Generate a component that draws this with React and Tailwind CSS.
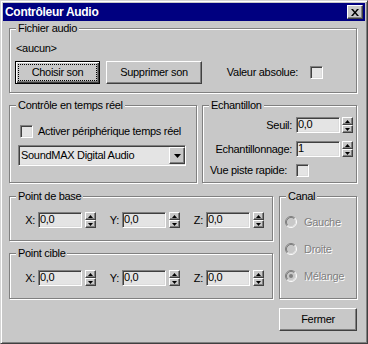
const raised =
  "border border-t-white border-l-white border-r-[#404040] border-b-[#404040] shadow-[inset_-1px_-1px_0_#808080]";
const sunken =
  "border border-t-[#808080] border-l-[#808080] border-r-white border-b-white shadow-[inset_1px_1px_0_#404040,inset_-1px_-1px_0_#dcdcdc]";

function Group({ label, className, children }) {
  return (
    <div className={`border border-[#808080] shadow-[1px_1px_0_#fff,inset_1px_1px_0_#fff] ${className}`}>
      <div className="-mt-[7px] ml-[6px] w-fit bg-[#c8c8c8] px-[2px] leading-[13px]">{label}</div>
      {children}
    </div>
  );
}

function Check() {
  return <div className={`h-[13px] w-[13px] shrink-0 bg-[#e4e4e4] ${sunken}`} />;
}

function Spinner({ gap }) {
  return (
    <div className={`flex h-[16px] w-[11px] shrink-0 flex-col ${gap}`}>
      <div className={`flex h-[8px] items-center justify-center bg-[#c8c8c8] ${raised}`}>
        <svg width="5" height="3" viewBox="0 0 5 3">
          <path d="M2.5 0 5 3H0z" fill="#000" />
        </svg>
      </div>
      <div className={`flex h-[8px] items-center justify-center bg-[#c8c8c8] ${raised}`}>
        <svg width="5" height="3" viewBox="0 0 5 3">
          <path d="M0 0h5L2.5 3z" fill="#000" />
        </svg>
      </div>
    </div>
  );
}

function NumField({ value }) {
  return (
    <div className={`h-[16px] w-[44px] shrink-0 bg-[#e4e4e4] pl-[1px] leading-[12px] ${sunken}`}>{value}</div>
  );
}

function Coord({ axis }) {
  return (
    <div className="flex items-center">
      <span className="w-[26px] pr-[3px] text-right">{axis}:</span>
      <NumField value="0,0" />
      <Spinner gap="ml-[3px]" />
    </div>
  );
}

function Radio({ checked }) {
  return (
    <svg width="12" height="12" viewBox="0 0 12 12" className="shrink-0">
      <circle cx="6" cy="6" r="5" fill="#c8c8c8" />
      <path d="M2.11 9.89A5.5 5.5 0 0 1 9.89 2.11" stroke="#808080" fill="none" />
      <path d="M9.89 2.11A5.5 5.5 0 0 1 2.11 9.89" stroke="#fff" fill="none" />
      <path d="M2.82 9.18A4.5 4.5 0 0 1 9.18 2.82" stroke="#404040" fill="none" opacity="0.5" />
      <path d="M9.18 2.82A4.5 4.5 0 0 1 2.82 9.18" stroke="#dcdcdc" fill="none" />
      {checked && <circle cx="6" cy="6" r="2" fill="#808080" />}
    </svg>
  );
}

const App = () => {
  return (
    <div className="flex h-[344px] w-[368px] flex-col border border-t-[#d4d4d4] border-l-[#d4d4d4] border-r-[#404040] border-b-[#404040] bg-[#c8c8c8] p-[2px] font-['Liberation_Sans',Arial,sans-serif] text-[11px] leading-[13px] tracking-[-0.3px] text-black shadow-[inset_1px_1px_0_#fff,inset_-1px_-1px_0_#808080]">
      <div className="flex h-[18px] items-center justify-between bg-[#000080] pl-[2px] pr-[2px]">
        <span className="text-[12px] font-bold leading-[18px] text-white">Contrôleur Audio</span>
        <div className={`flex h-[14px] w-[16px] items-center justify-center bg-[#c8c8c8] ${raised}`}>
          <svg width="8" height="7" viewBox="0 0 8 7">
            <path d="M0 0h2l2 2.4L6 0h2L5 3.5 8 7H6L4 4.6 2 7H0l3-3.5z" fill="#000" />
          </svg>
        </div>
      </div>

      <div className="flex flex-col pl-[6px]">
        <Group label="Fichier audio" className="mt-[7px] h-[65px] w-[348px]">
          <div className="ml-[6px] mt-[7px]">&lt;aucun&gt;</div>
          <div className="mt-[6px] flex h-[23px] items-center pl-[5px]">
            <button className="h-[23px] w-[85px] border border-black bg-[#c8c8c8] p-[2px] shadow-[inset_1px_1px_0_#fff,inset_-1px_-1px_0_#404040,inset_-2px_-2px_0_#808080]">
              <span className="flex h-full w-full items-center justify-center border border-dotted border-black">
                Choisir son
              </span>
            </button>
            <button className={`ml-[6px] h-[23px] w-[96px] bg-[#c8c8c8] ${raised}`}>Supprimer son</button>
            <span className="ml-auto">Valeur absolue:</span>
            <div className="ml-[12px] mr-[33px]">
              <Check />
            </div>
          </div>
        </Group>

        <div className="mt-[12px] flex gap-[5px]">
          <Group label="Contrôle en temps réel" className="h-[78px] w-[188px]">
            <div className="ml-[10px] mt-[13px] flex h-[13px] items-center">
              <Check />
              <span className="ml-[5px]">Activer périphérique temps réel</span>
            </div>
            <div className={`ml-[8px] mt-[7px] flex h-[21px] w-[168px] items-center bg-[#e4e4e4] ${sunken}`}>
              <span className="flex-1 pl-[2px]">SoundMAX Digital Audio</span>
              <div className={`flex h-[17px] w-[16px] items-center justify-center bg-[#c8c8c8] ${raised}`}>
                <svg width="7" height="4" viewBox="0 0 7 4">
                  <path d="M0 0h7L3.5 4z" fill="#000" />
                </svg>
              </div>
            </div>
          </Group>

          <Group label="Echantillon" className="h-[78px] w-[155px]">
            <div className="mt-[5px] flex h-[16px] items-center justify-end pr-[3px]">
              <span className="mr-[4px]">Seuil:</span>
              <NumField value="0,0" />
              <Spinner gap="ml-[2px]" />
            </div>
            <div className="mt-[8px] flex h-[16px] items-center justify-end pr-[3px]">
              <span className="mr-[4px]">Echantillonnage:</span>
              <NumField value="1" />
              <Spinner gap="ml-[2px]" />
            </div>
            <div className="mt-[7px] flex h-[13px] items-center justify-end pr-[47px]">
              <span className="mr-[9px]">Vue piste rapide:</span>
              <Check />
            </div>
          </Group>
        </div>

        <div className="mt-[13px] flex gap-[6px]">
          <div className="flex w-[264px] flex-col gap-[12px]">
            <Group label="Point de base" className="h-[45px] w-[264px]">
              <div className="mt-[9px] flex h-[16px] items-center pl-[2px]">
                <Coord axis="X" />
                <Coord axis="Y" />
                <Coord axis="Z" />
              </div>
            </Group>
            <Group label="Point cible" className="h-[46px] w-[264px]">
              <div className="mt-[10px] flex h-[16px] items-center pl-[2px]">
                <Coord axis="X" />
                <Coord axis="Y" />
                <Coord axis="Z" />
              </div>
            </Group>
          </div>

          <Group label="Canal" className="h-[103px] w-[78px]">
            <div className="flex flex-col gap-[15px] pl-[5px] pt-[13px] text-[#808080] [text-shadow:1px_1px_0_#fff]">
              <div className="flex h-[12px] items-center">
                <Radio />
                <span className="ml-[7px]">Gauche</span>
              </div>
              <div className="flex h-[12px] items-center">
                <Radio />
                <span className="ml-[7px]">Droite</span>
              </div>
              <div className="flex h-[12px] items-center">
                <Radio checked />
                <span className="ml-[7px]">Mélange</span>
              </div>
            </div>
          </Group>
        </div>

        <div className="mt-[9px] flex w-[348px] justify-end">
          <button className={`h-[23px] w-[78px] bg-[#c8c8c8] ${raised}`}>Fermer</button>
        </div>
      </div>
    </div>
  );
};

export default App;
